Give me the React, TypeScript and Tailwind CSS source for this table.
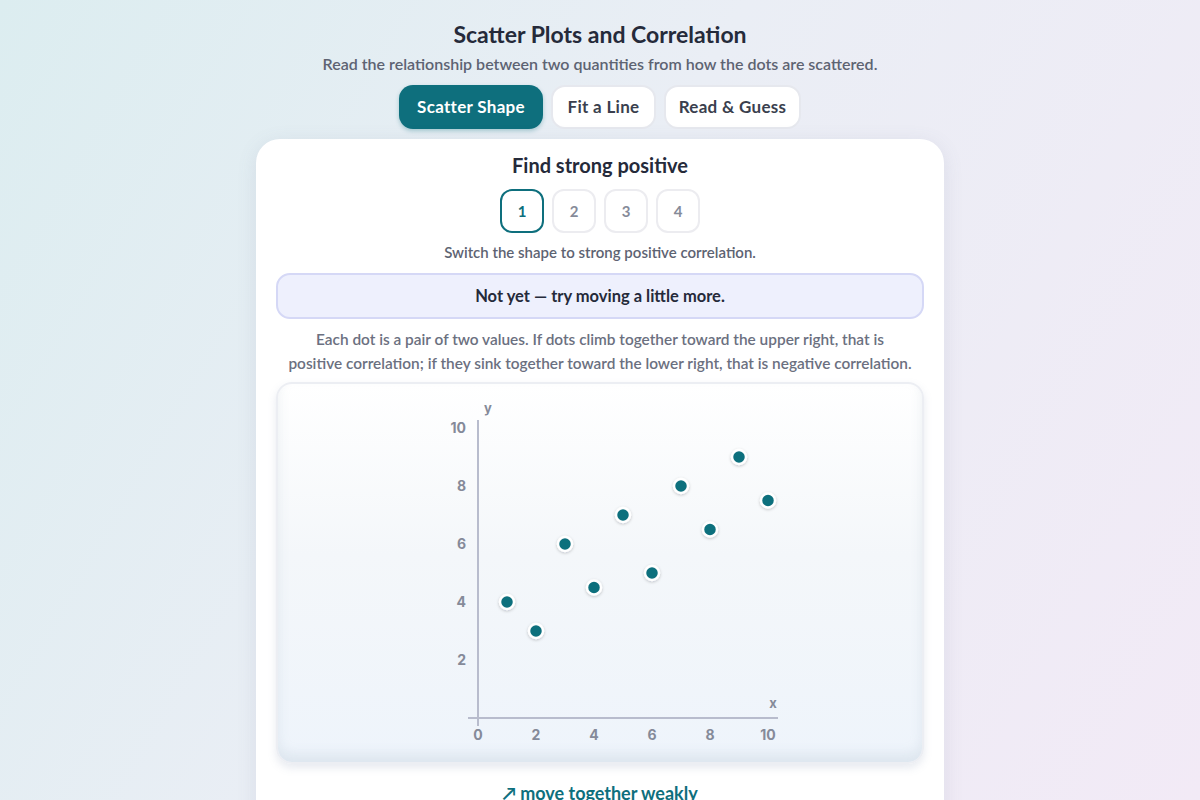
import React from "react";

const pts: [number, number][] = [
  [1, 4], [2, 3], [3, 6], [4, 4.5], [5, 7], [6, 5], [7, 8], [8, 6.5], [9, 9], [10, 7.5],
];

function Chart() {
  const ox = 58;
  const oy = 325;
  const u = 29;
  return (
    <svg width="360" height="360" viewBox="0 0 360 360" className="block">
      <defs>
        <filter id="ds" x="-50%" y="-50%" width="200%" height="200%">
          <feDropShadow dx="0" dy="1" stdDeviation="1.5" floodColor="#0f172a" floodOpacity="0.22" />
        </filter>
      </defs>
      <line x1={ox} y1={oy + 8} x2={ox} y2={27} stroke="#b8bccd" strokeWidth="2" />
      <line x1={ox - 10} y1={oy} x2={358} y2={oy} stroke="#b8bccd" strokeWidth="2" />
      {[0, 2, 4, 6, 8, 10].map((v) => (
        <text key={"x" + v} x={ox + v * u} y={oy + 22} textAnchor="middle" fontSize="14" fontWeight="700" fill="#858a99" fontFamily="Inter, sans-serif">
          {v}
        </text>
      ))}
      {[2, 4, 6, 8, 10].map((v) => (
        <text key={"y" + v} x={ox - 12} y={oy - v * u + 5} textAnchor="end" fontSize="14" fontWeight="700" fill="#858a99" fontFamily="Inter, sans-serif">
          {v}
        </text>
      ))}
      <text x={ox + 10} y={20} textAnchor="middle" fontSize="13" fontWeight="700" fill="#858a99" fontFamily="Inter, sans-serif">y</text>
      <text x={353} y={315} textAnchor="middle" fontSize="13" fontWeight="700" fill="#858a99" fontFamily="Inter, sans-serif">x</text>
      {pts.map(([x, y], i) => (
        <circle key={i} cx={ox + x * u} cy={oy - y * u} r="7" fill="#0e6f7d" stroke="#ffffff" strokeWidth="2.5" filter="url(#ds)" />
      ))}
    </svg>
  );
}

export default function App() {
  return (
    <div
      className="w-[1200px] h-[800px] overflow-hidden bg-[linear-gradient(120deg,#dcedf0_0%,#eaeef5_45%,#f2eaf6_100%)] text-[#242938]"
      style={{ fontFamily: "Lato, 'Noto Sans', sans-serif" }}
    >
      <div className="flex flex-col items-center pt-[20px]">
        <h1 className="text-[23px] font-bold leading-[28px] text-[#252a3a]">Scatter Plots and Correlation</h1>
        <p className="mt-[6px] text-[16px] font-semibold leading-[20px] text-[#5d6372]">
          Read the relationship between two quantities from how the dots are scattered.
        </p>
        <div className="mt-[11px] flex gap-[8px]">
          <button className="h-[44px] w-[144px] rounded-[14px] bg-[#0e6f7d] text-[17px] font-bold tracking-[0.3px] text-white shadow-[0_2px_4px_rgba(14,111,125,0.3)]">
            Scatter Shape
          </button>
          <button className="h-[44px] w-[105px] rounded-[14px] border-2 border-[#e6e8ee] bg-white text-[17px] font-bold tracking-[0.3px] text-[#3a3f4e]">
            Fit a Line
          </button>
          <button className="h-[44px] w-[137px] rounded-[14px] border-2 border-[#e6e8ee] bg-white text-[17px] font-bold tracking-[0.3px] text-[#3a3f4e]">
            Read &amp; Guess
          </button>
        </div>
        <div className="mt-[10px] w-[688px] h-[700px] rounded-[24px] bg-white px-[20px] pt-[14px] shadow-[0_4px_20px_rgba(100,110,140,0.12)] flex flex-col items-center">
          <h2 className="text-[20px] font-bold leading-[24px] text-[#252a3a]">Find strong positive</h2>
          <div className="mt-[12px] flex gap-[8px]">
            <div className="flex h-[44px] w-[44px] items-center justify-center rounded-[12px] border-2 border-[#0e6f7d] text-[15px] font-bold text-[#0e6f7d]">1</div>
            {["2", "3", "4"].map((n) => (
              <div key={n} className="flex h-[44px] w-[44px] items-center justify-center rounded-[12px] border-2 border-[#ececf0] text-[15px] font-bold text-[#868b99]">
                {n}
              </div>
            ))}
          </div>
          <p className="mt-[9px] text-[15px] font-semibold leading-[20px] text-[#5d6372]">Switch the shape to strong positive correlation.</p>
          <div className="mt-[11px] flex h-[46px] w-full items-center justify-center rounded-[14px] border-2 border-[#d5d8f6] bg-[#eef0fd] text-[16.5px] font-bold text-[#252a3a]">
            Not yet — try moving a little more.
          </div>
          <p className="mt-[8px] text-center text-[15.4px] font-semibold leading-[24px] text-[#6b7080]">
            Each dot is a pair of two values. If dots climb together toward the upper right, that is
            <br />
            positive correlation; if they sink together toward the lower right, that is negative correlation.
          </p>
          <div className="mt-[7px] flex w-full justify-center rounded-[16px] border-2 border-[#eceef3] bg-[linear-gradient(180deg,#ffffff_0%,#f4f7fa_45%,#eef4fb_100%)] pt-[9px] pb-[9px] shadow-[inset_0_-8px_12px_rgba(150,170,190,0.18),0_4px_8px_rgba(120,140,170,0.18)]">
            <Chart />
          </div>
          <p className="mt-[18px] text-[18px] font-bold leading-[22px] text-[#0e6f7d]">↗ move together weakly</p>
        </div>
      </div>
    </div>
  );
}
